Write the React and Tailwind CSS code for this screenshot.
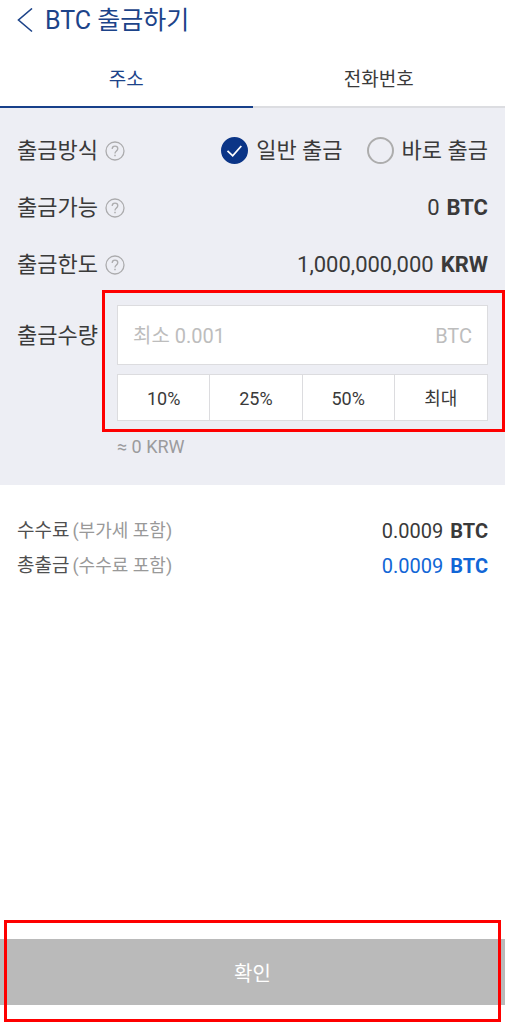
import { useState } from 'react';

const tabs = [
  { id: 'address', label: '주소' },
  { id: 'phone', label: '전화번호' },
];

const methods = [
  { id: 'normal', label: '일반 출금' },
  { id: 'instant', label: '바로 출금' },
];

const ratios = ['10%', '25%', '50%', '최대'];

function HelpButton({ label }) {
  return (
    <button type="button" aria-label={label} className="text-[#acacae]">
      <svg className="size-5" viewBox="0 0 20 20" fill="none" stroke="currentColor">
        <circle cx="10" cy="10" r="9" strokeWidth="1.3" />
        <path d="M7.2 8C7.2 6.2 8.4 5.2 10 5.2s2.8 1 2.8 2.6c0 1.2-.7 1.7-1.6 2.4-.8.6-1.2 1.1-1.2 2.3" strokeWidth="1.3" />
        <path d="M10 13.7v1.5" strokeWidth="1.5" />
      </svg>
    </button>
  );
}

function Amount({ value, unit, className }) {
  return (
    <span className={`flex gap-[7px] ${className}`}>
      <span>{value}</span>
      <b className="font-bold">{unit}</b>
    </span>
  );
}

function InfoRow({ label, children }) {
  return (
    <div className="flex h-[57px] items-center justify-between">
      <div className="flex items-center gap-[7px]">
        <span>{label}</span>
        <HelpButton label={`${label} 도움말`} />
      </div>
      {children}
    </div>
  );
}

function MethodRadio({ method, checked, onChange }) {
  return (
    <label className="flex items-center gap-2">
      <span className="grid size-[27px] place-items-center">
        <input
          type="radio"
          name="method"
          value={method.id}
          checked={checked}
          onChange={() => onChange(method.id)}
          className="col-start-1 row-start-1 size-[27px] appearance-none rounded-full border-2 border-[#adadad] checked:border-[#0b3587] checked:bg-[#0b3587]"
        />
        {checked && (
          <svg className="pointer-events-none col-start-1 row-start-1 size-[27px]" viewBox="0 0 27 27" fill="none" stroke="white" strokeWidth="1.8">
            <path d="M6.5 13.8l5.2 5 8.6-9.8" />
          </svg>
        )}
      </span>
      <span>{method.label}</span>
    </label>
  );
}

function FeeRow({ label, note, value, valueClass }) {
  return (
    <div className="flex h-[35px] items-center justify-between">
      <span className="flex gap-[3px] text-[19px] text-[#4f4f4f]">
        {label} <span className="text-lg leading-7 text-[#999999]">{note}</span>
      </span>
      <Amount value={value} unit="BTC" className={`text-xl ${valueClass}`} />
    </div>
  );
}

function App() {
  const [tab, setTab] = useState('address');
  const [method, setMethod] = useState('normal');
  const [amount, setAmount] = useState('');

  return (
    <div className="flex min-h-screen flex-col bg-white font-[Roboto,'Noto_Sans_CJK_KR',sans-serif] text-[22px] leading-7 text-[#3a3a3a]">
      <header className="flex h-[42px] items-center gap-3 px-[17px] text-[#1c4389]">
        <button type="button" aria-label="뒤로">
          <svg className="h-[26px] w-4" viewBox="0 0 16 26" fill="none" stroke="currentColor" strokeWidth="1.6">
            <path d="M15 .5L1.5 12 15 23.5" />
          </svg>
        </button>
        <h1 className="text-[25px]">BTC 출금하기</h1>
      </header>

      <nav className="mt-2 flex h-[58px]">
        {tabs.map((item) => (
          <button
            key={item.id}
            type="button"
            onClick={() => setTab(item.id)}
            className={`flex-1 border-b-2 pt-1 text-[19px] ${
              tab === item.id ? 'border-[#17408a] text-[#1c4389]' : 'border-[#dcdde1] text-[#3a3a3a]'
            }`}
          >
            {item.label}
          </button>
        ))}
      </nav>

      <section className="bg-[#edeef4] px-[17px] pt-[14px] pb-6">
        <InfoRow label="출금방식">
          <div className="flex gap-6">
            {methods.map((item) => (
              <MethodRadio key={item.id} method={item} checked={method === item.id} onChange={setMethod} />
            ))}
          </div>
        </InfoRow>
        <InfoRow label="출금가능">
          <Amount value="0" unit="BTC" />
        </InfoRow>
        <InfoRow label="출금한도">
          <Amount value="1,000,000,000" unit="KRW" />
        </InfoRow>

        <div className="mt-3 flex">
          <label htmlFor="amount" className="flex h-[60px] w-[100px] shrink-0 items-center pt-0.5">
            출금수량
          </label>
          <div className="min-w-0 flex-1">
            <div className="relative">
              <div className="flex h-[60px] items-center border border-[#dcdcdf] bg-white px-[15px] pt-0.5 text-[#bdbdbd]">
                <input
                  id="amount"
                  type="text"
                  value={amount}
                  onChange={(e) => setAmount(e.target.value)}
                  placeholder="최소 0.001"
                  className="min-w-0 flex-1 text-xl text-[#3a3a3a] outline-none placeholder:text-[#bdbdbd]"
                />
                <span className="text-xl">BTC</span>
              </div>
              <div className="mt-[9px] grid h-[47px] grid-cols-4 divide-x divide-[#dcdcdf] border border-[#dcdcdf] bg-white">
                {ratios.map((ratio) => (
                  <button key={ratio} type="button" className="pt-0.5 text-lg">
                    {ratio}
                  </button>
                ))}
              </div>
              <div className="pointer-events-none absolute -top-[15px] -right-[17px] -bottom-[11px] -left-[15px] border-[3px] border-[#fe0000]" />
            </div>
            <p className="mt-3 text-lg leading-7 text-[#9b9b9d]">≈ 0 KRW</p>
          </div>
        </div>
      </section>

      <section className="px-[17px] pt-7">
        <FeeRow label="수수료" note="(부가세 포함)" value="0.0009" valueClass="text-[#3a3a3a]" />
        <FeeRow label="총출금" note="(수수료 포함)" value="0.0009" valueClass="text-[#1166d6]" />
      </section>

      <footer className="relative mt-auto pb-[19px]">
        <button type="button" className="h-[66px] w-full bg-[#bababa] pt-1 text-xl text-white">
          확인
        </button>
        <div className="pointer-events-none absolute inset-x-1 -top-[19px] bottom-[2px] border-[3px] border-[#fe0000]" />
      </footer>
    </div>
  );
}

export default App;
